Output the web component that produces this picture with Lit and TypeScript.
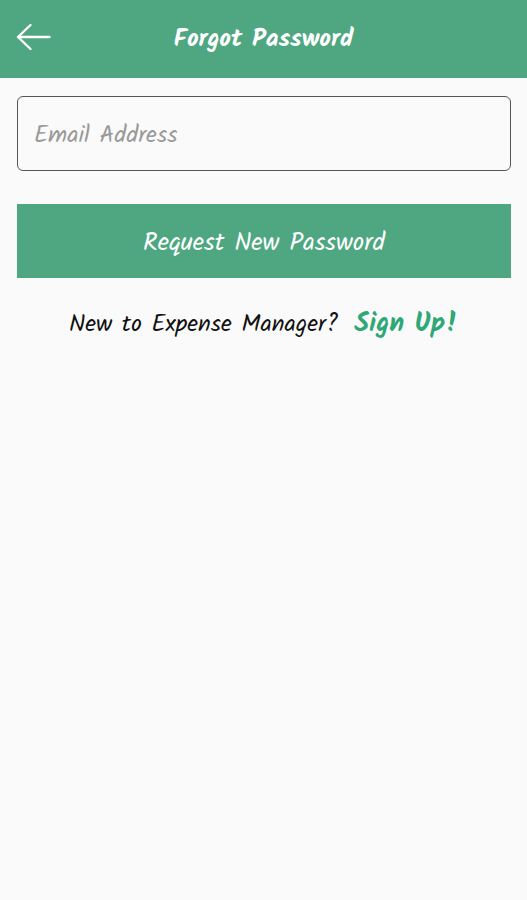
import { LitElement, html, css } from "lit";
import { customElement } from "lit/decorators.js";

@customElement("app-root")
export class AppRoot extends LitElement {
  static styles = css`
    :host {
      display: block;
      min-height: 100vh;
      background: #fafafa;
      color: #111;
      font-family: "Kalam", "Lato", sans-serif;
      font-size: 24px;
      line-height: 32px;
    }
    * {
      box-sizing: border-box;
    }
    .bar {
      display: grid;
      grid-template-columns: 36px 1fr 36px;
      align-items: center;
      padding: 0 16px 4px;
      height: 78px;
      background: #4ea780;
      color: #fff;
    }
    .back {
      display: flex;
      padding: 0;
      border: 0;
      background: none;
      color: inherit;
      cursor: pointer;
    }
    .title {
      margin: 0;
      padding-top: 4px;
      font-size: 25px;
      font-weight: 700;
      text-align: center;
    }
    .form {
      display: flex;
      flex-direction: column;
      gap: 33px;
      padding: 18px 16px 0 17px;
    }
    .field,
    .submit {
      width: 100%;
      font: inherit;
    }
    .field {
      height: 75px;
      padding: 4px 16px 0;
      border: 1px solid #555;
      border-radius: 6px;
      background: transparent;
      color: #111;
    }
    .field::placeholder {
      color: #999;
      opacity: 1;
    }
    .submit {
      height: 74px;
      padding: 4px 16px 0;
      border: 0;
      background: #4ea780;
      color: #fff;
      font-size: 25px;
      cursor: pointer;
    }
    .join {
      display: flex;
      flex-wrap: wrap;
      justify-content: center;
      align-items: baseline;
      gap: 16px;
      margin: 0;
      padding: 30px 16px;
    }
    .link {
      color: #2fa777;
      font-size: 27px;
      font-weight: 700;
      text-decoration: none;
    }
  `;

  render() {
    return html`
      <header class="bar">
        <button class="back" type="button" aria-label="Back">
          <svg width="36" height="32" viewBox="0 0 36 32" fill="none" stroke="currentColor" stroke-width="2.400" stroke-linecap="round" stroke-linejoin="round" aria-hidden="true">
            <path d="M33.500 16H2M14.500 4L2 16L14.500 28" />
          </svg>
        </button>
        <h1 class="title">Forgot Password</h1>
      </header>
      <main>
        <form class="form" @submit=${(e: Event) => e.preventDefault()}>
          <input class="field" type="email" placeholder="Email Address" aria-label="Email Address" />
          <button class="submit" type="submit">Request New Password</button>
        </form>
        <p class="join">
          <span>New to Expense Manager?</span>
          <a class="link" href="#signup">Sign Up!</a>
        </p>
      </main>
    `;
  }
}
